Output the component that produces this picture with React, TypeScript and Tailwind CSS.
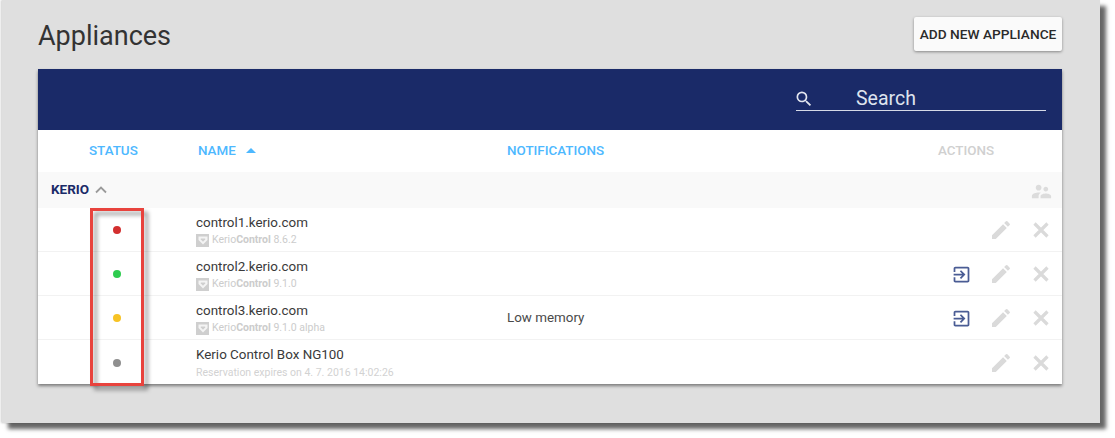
import React from 'react';

const appliances = [
  { name: 'control1.kerio.com', version: '8.6.2', dot: 'bg-[#d32f2f]', connect: false, note: '' },
  { name: 'control2.kerio.com', version: '9.1.0', dot: 'bg-[#2ecc4f]', connect: true, note: '' },
  { name: 'control3.kerio.com', version: '9.1.0 alpha', dot: 'bg-[#f7c325]', connect: true, note: 'Low memory' },
  { name: 'Kerio Control Box NG100', version: '', dot: 'bg-[#8f8f8f]', connect: false, note: '' },
];

const Shield = () => (
  <span className="flex h-[13px] w-[13px] items-center justify-center bg-[#cfcfcf]">
    <svg width="10" height="10" viewBox="0 0 10 10">
      <path d="M0.5 1.5h9v3.4L5 9.5 0.5 4.9z" fill="#f4f4f4" />
      <path d="M2.8 3.4h4.4v1L5 6.8 2.8 4.4z" fill="#cfcfcf" />
    </svg>
  </span>
);

const SearchIcon = () => (
  <svg width="20" height="20" viewBox="0 0 24 24" fill="#e3e6ef" className="-ml-[2px] mt-[3px]">
    <path d="M15.5 14h-.79l-.28-.27A6.471 6.471 0 0 0 16 9.5 6.5 6.5 0 1 0 9.5 16c1.61 0 3.09-.59 4.23-1.57l.27.28v.79l5 4.99L20.49 19l-4.99-5zm-6 0C7.01 14 5 11.99 5 9.5S7.01 5 9.5 5 14 7.01 14 9.5 11.99 14 9.5 14z" />
  </svg>
);

const GroupIcon = () => (
  <svg width="23" height="23" viewBox="0 0 24 24" fill="#dcdcdc">
    <path d="M16.5 12c1.38 0 2.49-1.12 2.49-2.5S17.88 7 16.5 7C15.12 7 14 8.12 14 9.5s1.12 2.5 2.5 2.5zM9 11c1.66 0 2.99-1.34 2.99-3S10.66 5 9 5C7.34 5 6 6.34 6 8s1.34 3 3 3zm7.5 3c-1.83 0-5.5.92-5.5 2.75V19h11v-2.25c0-1.83-3.67-2.75-5.5-2.75zM9 13c-2.33 0-7 1.17-7 3.5V19h7v-2.25c0-.85.33-2.34 2.37-3.47C10.5 13.1 9.66 13 9 13z" />
  </svg>
);

const ConnectIcon = () => (
  <svg width="21" height="21" viewBox="0 0 24 24" fill="#4a5c94" className="mr-[17px]">
    <path d="M10.09 15.59L11.5 17l5-5-5-5-1.41 1.41L12.67 11H3v2h9.67l-2.58 2.59zM19 3H5c-1.11 0-2 .9-2 2v4h2V5h14v14H5v-4H3v4c0 1.1.89 2 2 2h14c1.1 0 2-.9 2-2V5c0-1.1-.9-2-2-2z" />
  </svg>
);

const PencilIcon = () => (
  <svg width="24" height="24" viewBox="0 0 24 24" fill="#dadada" className="mr-[16px]">
    <path d="M3 17.25V21h3.75L17.81 9.94l-3.75-3.75L3 17.25zM20.71 7.04a1 1 0 0 0 0-1.41l-2.34-2.34a1 1 0 0 0-1.41 0l-1.83 1.83 3.75 3.75 1.83-1.83z" />
  </svg>
);

const CloseIcon = () => (
  <svg width="24" height="24" viewBox="0 0 24 24" fill="none" stroke="#dadada" strokeWidth="3.2">
    <path d="M5.5 5.5l13 13M18.5 5.5l-13 13" />
  </svg>
);

export default function App() {
  return (
    <div className="h-[438px] w-[1115px] overflow-hidden bg-white font-['Roboto',sans-serif]">
      <div className="relative ml-[2px] h-[423px] w-[1098px] bg-[#dfdfdf] pl-[36px] pr-[38px] pt-[17px] shadow-[6px_6px_4px_rgba(0,0,0,0.6),-1px_0_2px_rgba(0,0,0,0.2)]">
        <div className="flex h-[52px] items-start justify-between">
          <h1 className="mt-[3px] text-[27px] leading-[32px] font-normal text-[#333333]">Appliances</h1>
          <button className="flex h-[34px] w-[148px] items-center justify-center rounded-[2px] bg-[#fafafa] text-[13.7px] font-medium text-[#2b2b2b] shadow-[0_1px_3px_rgba(0,0,0,0.4)]">
            ADD NEW APPLIANCE
          </button>
        </div>

        <div className="w-[1024px] bg-white shadow-[0_2px_3px_rgba(0,0,0,0.45)]">
          <div className="flex h-[61px] items-end justify-end bg-[#1a2a68] pb-[19px] pr-[16px]">
            <div className="flex h-[27px] w-[250px] items-center border-b border-[#d5d9e6]">
              <SearchIcon />
              <span className="ml-[42px] mt-[3px] text-[19.5px] leading-[24px] text-[#dfe3ee]">Search</span>
            </div>
          </div>

          <div className="flex h-[42px] items-center text-[13.4px] font-medium">
            <span className="ml-[51px] w-[109px] text-[#4db8ff]">STATUS</span>
            <span className="flex w-[309px] items-center text-[#4db8ff]">
              NAME
              <span className="ml-[10px] h-0 w-0 border-x-[5px] border-b-[5px] border-x-transparent border-b-[#4db8ff]" />
            </span>
            <span className="w-[431px] text-[#4db8ff]">NOTIFICATIONS</span>
            <span className="text-[#d0d0d0]">ACTIONS</span>
          </div>

          <div className="flex h-[36px] items-center justify-between bg-[#f9f9f9] pl-[13px] pr-[9px]">
            <div className="flex items-center">
              <span className="-mt-[1px] text-[13.5px] font-bold text-[#1a2a68]">KERIO</span>
              <svg className="ml-[6px]" width="12" height="8" viewBox="0 0 12 8" fill="none" stroke="#9a9a9a" strokeWidth="1.8">
                <path d="M1 6.5l5-5 5 5" />
              </svg>
            </div>
            <span className="mt-[2px]"><GroupIcon /></span>
          </div>

          {appliances.map((a, i) => (
            <div key={a.name} className={`flex h-[44px] items-center pt-[1px] ${i < 3 ? 'border-b border-[#f2f2f2]' : ''}`}>
              <div className="flex w-[158px] justify-center">
                <span className={`h-2 w-2 rounded-full ${a.dot}`} />
              </div>
              <div className="w-[311px]">
                <div className="text-[13.4px] leading-[17px] text-[#3a3a3a]">{a.name}</div>
                {a.version ? (
                  <div className="mt-[3px] flex h-[13px] items-center text-[10.5px] text-[#cccccc]">
                    <Shield />
                    <span className="ml-[3px]">
                      Kerio<span className="font-bold">Control</span> {a.version}
                    </span>
                  </div>
                ) : (
                  <div className="mt-[3px] h-[13px] text-[10.5px] leading-[13px] text-[#d2d2d2]">Reservation expires on 4. 7. 2016 14:02:26</div>
                )}
              </div>
              <div className="flex-1 text-[13.4px] text-[#4a4a4a]">{a.note}</div>
              <div className="flex items-center pr-[9px]">
                {a.connect && <ConnectIcon />}
                <PencilIcon />
                <CloseIcon />
              </div>
            </div>
          ))}
        </div>

        <div className="absolute left-[92px] top-[212px] h-[178px] w-[54px] border-[3px] border-black/40 blur-[2px]" />
        <div className="absolute left-[88px] top-[208px] h-[178px] w-[54px] border-[3px] border-[#e8433d]" />
      </div>
    </div>
  );
}
